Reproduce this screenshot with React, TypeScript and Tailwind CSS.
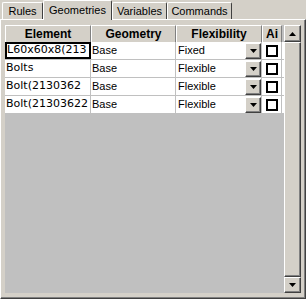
import React from "react";

type Row = { element: string; geometry: string; flex: string };

const rows: Row[] = [
  { element: "L60x60x8(213", geometry: "Base", flex: "Fixed" },
  { element: "Bolts", geometry: "Base", flex: "Flexible" },
  { element: "Bolt(2130362", geometry: "Base", flex: "Flexible" },
  { element: "Bolt(21303622", geometry: "Base", flex: "Flexible" },
];

const tabs = [
  { label: "Rules", w: "w-[41px]" },
  { label: "Geometries", w: "w-[69px]" },
  { label: "Variables", w: "w-[55px]" },
  { label: "Commands", w: "w-[65px]" },
];

function Arrow({ up }: { up?: boolean }) {
  return (
    <svg width="7" height="4" viewBox="0 0 7 4" className={up ? "rotate-180" : ""}>
      <path d="M0 0h7L3.5 4z" fill="#000" />
    </svg>
  );
}

function Raised({ className, children }: { className?: string; children?: React.ReactNode }) {
  return (
    <div
      className={
        "flex items-center justify-center bg-[#d4d0c8] border-t border-l border-t-white border-l-white border-r border-b border-r-[#404040] border-b-[#404040] shadow-[inset_-1px_-1px_0_#808080] " +
        (className ?? "")
      }
    >
      {children}
    </div>
  );
}

function HeaderCell({ w, children }: { w: string; children: React.ReactNode }) {
  return (
    <div
      className={
        w +
        " h-full flex items-center justify-center bg-[#d4d0c8] border-t border-l border-white border-r border-r-[#808080] font-bold text-[12px]"
      }
    >
      {children}
    </div>
  );
}

export default function App() {
  return (
    <div className="w-[306px] h-[299px] bg-[#d4d0c8] text-black text-[11px] overflow-hidden font-['Liberation_Sans',Arial,sans-serif]">
      <div className="h-[19px] flex items-end pl-[2px] relative">
        {tabs.map((t, i) => {
          const sel = i === 1;
          return (
            <div
              key={t.label}
              className={
                t.w +
                " relative flex items-center justify-center border-l border-t border-white border-r border-r-[#404040] rounded-t-[2px] " +
                (sel ? "h-[20px] -mb-[1px] z-10 bg-[#d4d0c8]" : "h-[17px]")
              }
            >
              {t.label}
            </div>
          );
        })}
      </div>
      <div className="h-[280px] border-t border-l border-white border-r border-b border-r-[#404040] border-b-[#404040] shadow-[inset_-1px_-1px_0_#808080] pl-[4px] pr-[4px] pt-[5px] pb-[5px]">
        <div className="h-full flex bg-[#c0c0c0]">
          <div className="flex-1 flex flex-col">
            <div className="h-[17px] flex">
              <HeaderCell w="w-[86px]">Element</HeaderCell>
              <HeaderCell w="w-[85px]">Geometry</HeaderCell>
              <HeaderCell w="w-[86px]">Flexibility</HeaderCell>
              <HeaderCell w="w-[20px]">Ai</HeaderCell>
            </div>
            {rows.map((r, i) => (
              <div key={i} className="h-[18px] flex bg-white border-b border-[#c0c0c0]">
                <div
                  className={
                    "w-[86px] overflow-hidden whitespace-nowrap flex items-center font-['DejaVu_Sans',sans-serif] " +
                    (i === 0 ? "border-2 border-black pl-[0px]" : "border-r border-[#c0c0c0] pl-[1px]")
                  }
                >
                  {r.element}
                </div>
                <div className="w-[85px] flex items-center pl-[1px] border-r border-[#c0c0c0]">{r.geometry}</div>
                <div className="w-[86px] flex items-center pl-[2px] border-r border-[#c0c0c0]">
                  <span className="flex-1">{r.flex}</span>
                  <Raised className="w-[16px] h-[16px]">
                    <Arrow />
                  </Raised>
                </div>
                <div className="w-[20px] flex items-center justify-center border-r border-[#c0c0c0]">
                  <div className="w-[12px] h-[12px] border-2 border-black bg-white" />
                </div>
              </div>
            ))}
          </div>
          <div className="w-[17px] flex flex-col bg-[#d4d0c8]">
            <Raised className="h-[17px]">
              <Arrow up />
            </Raised>
            <Raised className="flex-1" />
            <Raised className="h-[16px]">
              <Arrow />
            </Raised>
          </div>
        </div>
      </div>
    </div>
  );
}
